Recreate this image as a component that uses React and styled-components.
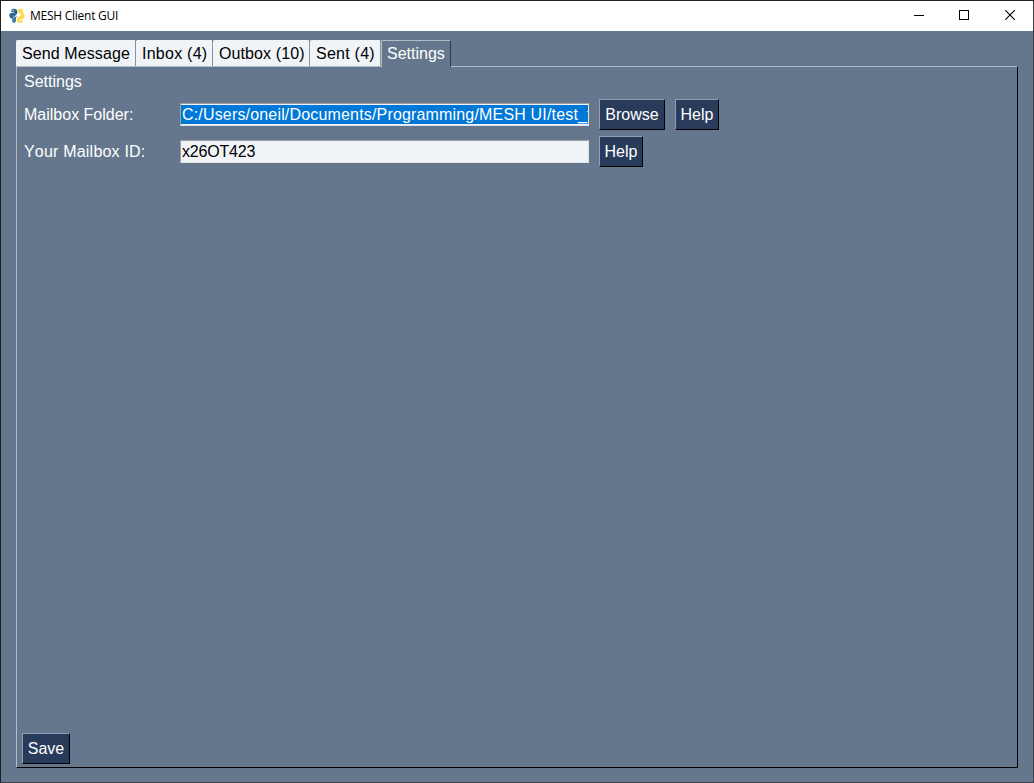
import React from 'react';
import styled, { createGlobalStyle } from 'styled-components';

const GlobalStyle = createGlobalStyle`
  * { box-sizing: border-box; }
  html, body, #root { height: 100%; }
  body { margin: 0; overflow: hidden; font: 16px/18px "Liberation Sans", Arial, sans-serif; font-kerning: none; }
`;

const Window = styled.div`
  display: flex;
  flex-direction: column;
  width: 1034px;
  height: 783px;
  border: 1px solid #231f20;
  border-bottom-color: #3d444e;
  border-right-color: #3b4048;
  background: #64778d;
  color: #fff;
`;

const TitleBar = styled.header`
  display: flex;
  align-items: center;
  flex: none;
  height: 30px;
  padding-left: 8px;
  background: #fff;
  color: #000;
`;

const Title = styled.h1`
  flex: 1;
  margin: 0 0 0 5px;
  font: 400 12px/16px "Open Sans", "Noto Sans", sans-serif;
  letter-spacing: ${(p) => p.$spacing};
`;

const Caption = styled.div`
  display: flex;
  flex: none;
  width: ${(p) => p.$width}px;
  height: 30px;
  padding-bottom: 2px;
  align-items: center;
  justify-content: center;
`;

const Notebook = styled.main`
  display: flex;
  flex: 1;
  flex-direction: column;
  padding: 9px 15px 14px;
`;

const TabStrip = styled.nav`
  display: flex;
  height: 26px;
`;

const Tab = styled.div`
  position: relative;
  flex: none;
  width: ${(p) => p.$width}px;
  height: ${(p) => (p.$active ? 27 : 26)}px;
  padding: 4px 0 0 5px;
  white-space: nowrap;
  border: 1px solid ${(p) => (p.$active ? '#b2bbc6' : '#f0f3f7')};
  border-right-color: ${(p) => (p.$active ? '#323c47' : '#8b929b')};
  border-bottom: 0;
  border-radius: 2px 2px 0 0;
  background: ${(p) => (p.$active ? '#64778d' : '#f0f3f7')};
  color: ${(p) => (p.$active ? '#fff' : '#000')};
  letter-spacing: ${(p) => p.$spacing || 0}px;
`;

const Pane = styled.section`
  display: flex;
  flex: 1;
  flex-direction: column;
  align-items: flex-start;
  width: 1002px;
  padding: 6px 5px 3px;
  border: 1px solid #b2bbc6;
  border-right-color: #000;
  border-bottom-color: #000;
`;

const Heading = styled.div`
  height: 26px;
  padding-left: 2px;
`;

const Row = styled.div`
  display: flex;
  align-items: center;
  height: 31px;
  margin-bottom: 6px;
  padding-left: 2px;
`;

const Label = styled.label`
  width: 156px;
  letter-spacing: ${(p) => p.$spacing || 0}px;
`;

const Entry = styled.div`
  width: 409px;
  height: 23px;
  margin-right: 10px;
  padding: 1px 0;
  overflow: hidden;
  white-space: nowrap;
  border: 1px solid #9f9f9f;
  border-right-color: #e3e3e3;
  border-bottom-color: #e3e3e3;
  background: #f0f3f7;
  color: #000;
`;

const EntryText = styled.div`
  height: 19px;
  padding-left: 1px;
  line-height: 19px;
  overflow: hidden;
  background: ${(p) => (p.$selected ? '#0078d7' : 'transparent')};
  color: ${(p) => (p.$selected ? '#fff' : '#000')};
  letter-spacing: ${(p) => p.$spacing || 0}px;
`;

const Button = styled.button`
  flex: none;
  width: ${(p) => p.$width}px;
  height: 31px;
  margin: 0 10px 0 0;
  padding: 0;
  border: 1px solid #939dad;
  border-right-color: #000;
  border-bottom-color: #000;
  background: #283b5b;
  color: #fff;
  font: inherit;
`;

const Footer = styled.footer`
  display: flex;
  margin-top: auto;
`;

function PythonIcon() {
  return (
    <svg width="16" height="16" viewBox="0 0 16 16">
      <path fill="#306998" d="M2.2 3.4C2.2 1.2 3.6.8 5.2.8 7.6.8 8.7 2.4 8.4 4.6 8.1 7 6.3 7.7 4.8 8.7 3.6 9.6 4.1 10.6 2.8 10.6 1 10.4.3 8.8.3 7 .3 5 1.5 4.7 4.8 4.7L4.8 4.1H2.2Z" />
      <path fill="#3f7cac" d="M3.1 12.3C2.9 10.4 4.1 9.5 5.5 9 6.7 8.5 7.5 7.6 7.8 8.6 7 9.6 6.9 10.6 7 12 7.1 13.6 6.4 14.9 5.1 14.9 3.9 14.9 3.2 14 3.1 12.3Z" />
      <path fill="#ffd94f" d="M8.7 3.2C8.8 1.5 10 .8 11.4.8 13.1.8 14 2 13.8 3.6 13.7 4.6 14.3 4.9 15 5.7 16 7 15.7 9.2 14.7 10.3 13.8 11.2 12.1 11 11.2 11.2V11.9H14C14 14 12.8 15 10.8 15 8.9 15 7.7 13.9 7.8 11.8 7.9 9.6 9.1 9 10.6 8.3 11.8 7.7 12.2 6.7 11.6 5.7 10.7 5.2 8.8 5.3 8.7 3.2Z" />
      <circle cx="4.2" cy="2.6" r=".6" fill="#fff" />
      <circle cx="11.6" cy="13.2" r=".6" fill="#fff" />
    </svg>
  );
}

function MinimizeIcon() {
  return (
    <svg width="10" height="10" shapeRendering="crispEdges">
      <path d="M0 5.5H10" stroke="#000" />
    </svg>
  );
}

function MaximizeIcon() {
  return (
    <svg width="10" height="10" shapeRendering="crispEdges">
      <path d="M.5 .5H9.5V9.5H.5Z" fill="none" stroke="#000" />
    </svg>
  );
}

function CloseIcon() {
  return (
    <svg width="10" height="10">
      <path d="M.2 .2 9.8 9.8M9.8 .2 .2 9.8" stroke="#000" strokeWidth="1.1" />
    </svg>
  );
}

const tabs = [
  { label: 'Send Message', width: 120, spacing: 0.1 },
  { label: 'Inbox (4)', width: 77, spacing: 0.25 },
  { label: 'Outbox (10)', width: 97, spacing: 0.1 },
  { label: 'Sent (4)', width: 71, spacing: 0.25 },
  { label: 'Settings', width: 70, active: true },
];

export default function App() {
  return (
    <>
      <GlobalStyle />
      <Window>
        <TitleBar>
          <PythonIcon />
          <Title $spacing="-0.25px">MESH Client GUI</Title>
          <Caption $width={44}><MinimizeIcon /></Caption>
          <Caption $width={46}><MaximizeIcon /></Caption>
          <Caption $width={46}><CloseIcon /></Caption>
        </TitleBar>
        <Notebook>
          <TabStrip>
            {tabs.map((t) => (
              <Tab key={t.label} $width={t.width} $active={t.active} $spacing={t.spacing}>
                {t.label}
              </Tab>
            ))}
          </TabStrip>
          <Pane>
            <Heading>Settings</Heading>
            <Row>
              <Label>Mailbox Folder:</Label>
              <Entry>
                <EntryText $selected $spacing={0.17}>C:/Users/oneil/Documents/Programming/MESH UI/test_f</EntryText>
              </Entry>
              <Button $width={66}>Browse</Button>
              <Button $width={44}>Help</Button>
            </Row>
            <Row>
              <Label $spacing={0.2}>Your Mailbox ID:</Label>
              <Entry>
                <EntryText $spacing={-0.2}>x26OT423</EntryText>
              </Entry>
              <Button $width={44}>Help</Button>
            </Row>
            <Footer>
              <Button $width={48}>Save</Button>
            </Footer>
          </Pane>
        </Notebook>
      </Window>
    </>
  );
}
